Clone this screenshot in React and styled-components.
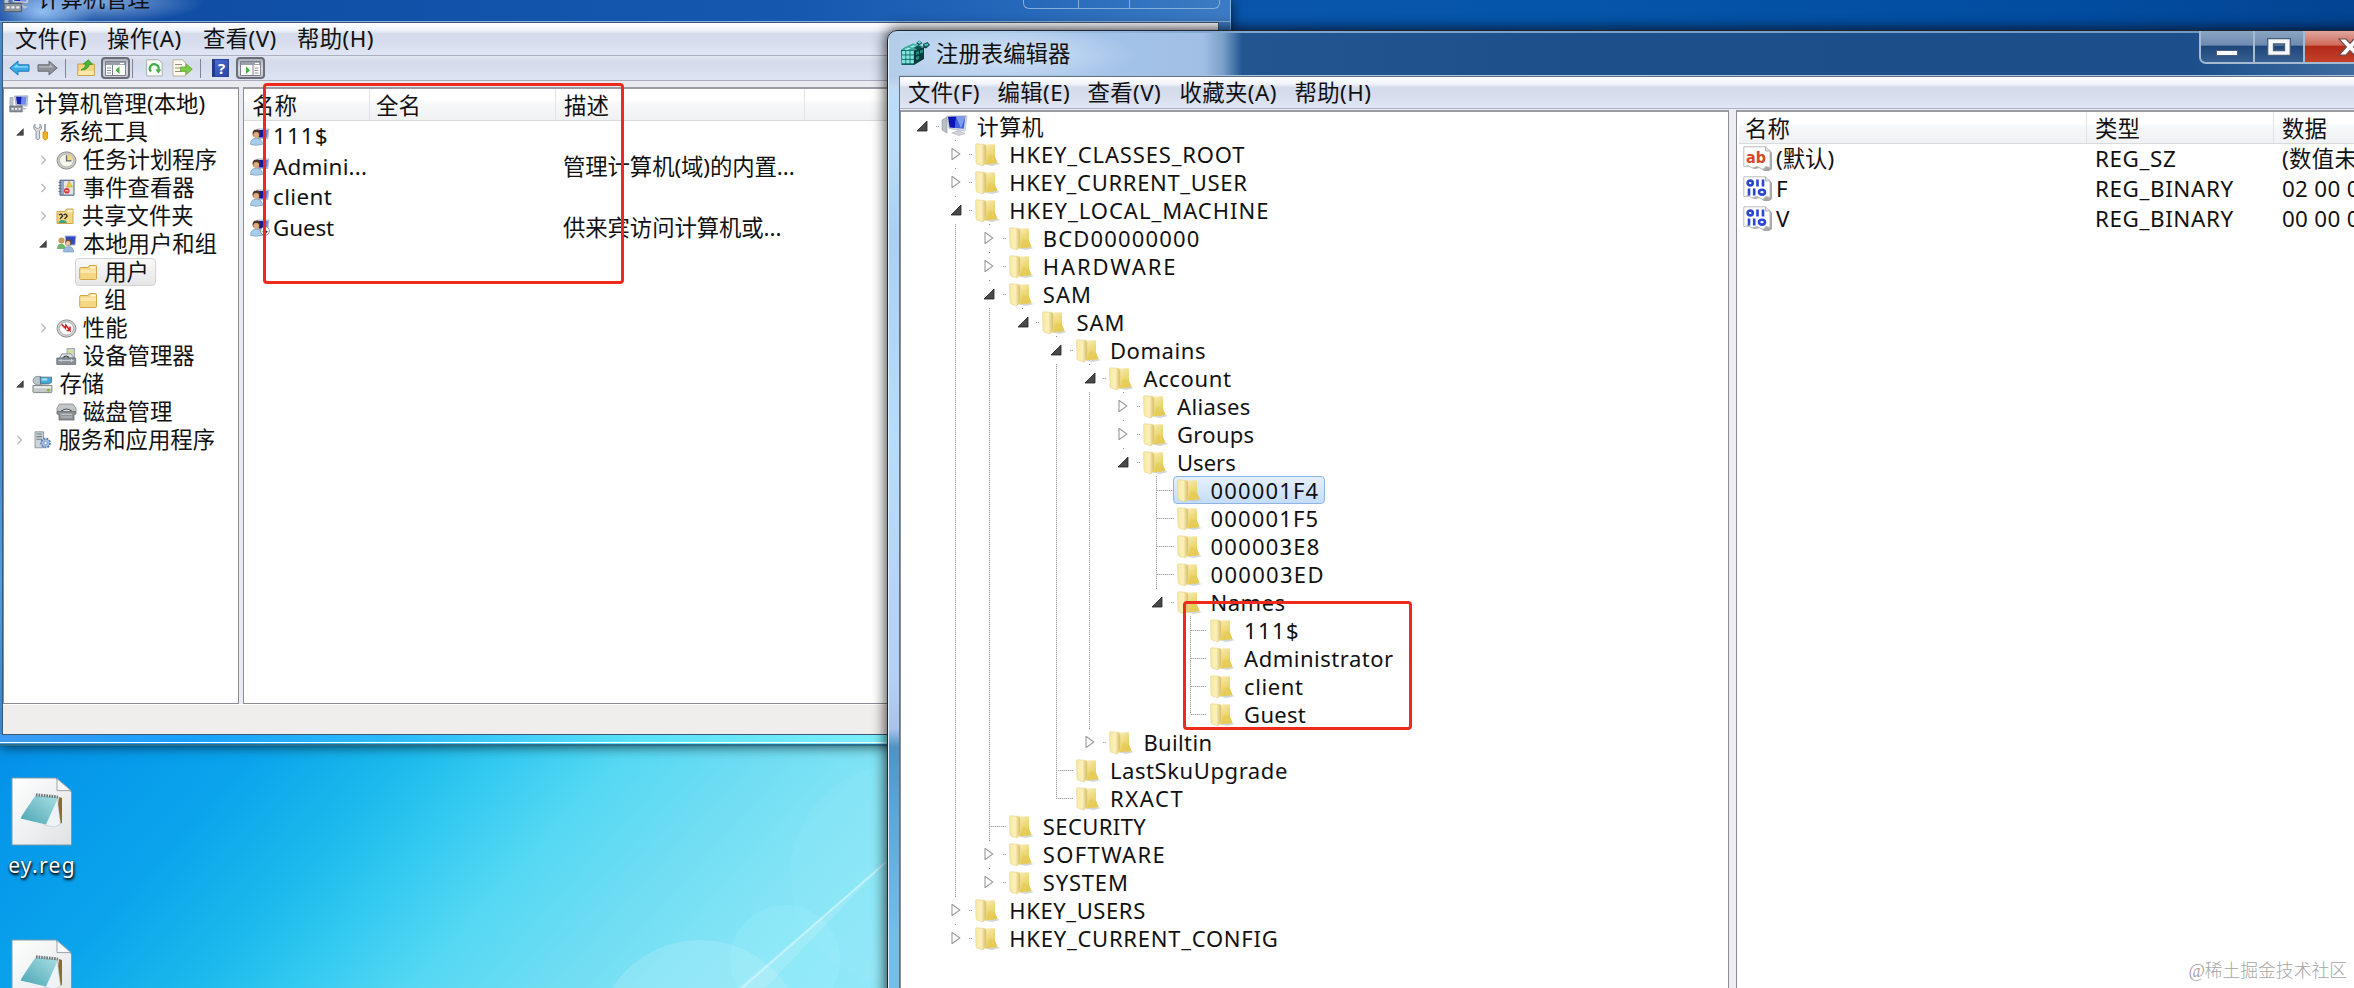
import React from "react";
import styled, { createGlobalStyle, css } from "styled-components";

const GlobalStyle = createGlobalStyle`
  * { box-sizing: border-box; }
  html, body, #root { margin: 0; padding: 0; width: 100%; height: 100%; }
  body {
    overflow: hidden;
    font-family: "Noto Sans", "Noto Sans CJK SC", sans-serif;
    font-size: 22.4px;
    color: #111;
  }
  svg { display: block; flex: none; }
`;

/* ---------- desktop ---------- */

const Desktop = styled.main`
  position: relative;
  width: 2354px;
  height: 988px;
  overflow: hidden;
  background: linear-gradient(90deg, #0a55ac 1200px, #0556ab 1500px, #024c9f 2100px, #034493 2354px);
`;

const Wallpaper = styled.div`
  position: absolute;
  left: 0;
  top: 700px;
  width: 900px;
  height: 288px;
  background: linear-gradient(132deg, #058ce4 0%, #0595ea 8%, #0aa4ec 26%, #1bb9ec 39%, #34caf1 48%, #55d8f3 58%, #6fddf3 70%, #80e3f5 80%, #93e9f8 100%);
`;

const DesktopIcons = styled.div`
  position: absolute;
  left: 0;
  top: 777px;
  width: 84px;
  display: flex;
  flex-direction: column;
  gap: 62px;
`;

const Shortcut = styled.div`
  height: 100px;
  display: flex;
  flex-direction: column;
  align-items: center;
  gap: 4px;
  color: #fff;
  font-size: 21px;
  line-height: 30px;
  letter-spacing: 1.3px;
  text-shadow: 1px 2px 3px #000, 0 1px 2px rgba(0, 0, 0, 0.9);
`;

const Watermark = styled.div`
  position: absolute;
  right: 7px;
  bottom: 5px;
  font-family: "Liberation Serif", "Noto Sans CJK SC", serif;
  font-size: 17.8px;
  font-weight: 300;
  line-height: 24px;
  color: #a5a5a5;
`;

const RedBox = styled.div`
  position: absolute;
  left: ${(p) => p.$x}px;
  top: ${(p) => p.$y}px;
  width: ${(p) => p.$w}px;
  height: ${(p) => p.$h}px;
  border: 3px solid #ee2a1c;
  border-radius: 4px;
`;

/* ---------- shared window parts ---------- */

const barFill = css`
  background: linear-gradient(180deg, #ffffff 0, #f1f4fb 22%, #d4dbea 34%, #d6ddec 60%, #e1e6f5 100%);
`;

const MenuBar = styled.nav`
  display: flex;
  height: ${(p) => p.$h}px;
  padding-left: ${(p) => p.$pad}px;
  border-bottom: 1px solid #aab0c2;
  ${barFill}
`;

const MenuItem = styled.span`
  width: ${(p) => p.$w}px;
  line-height: ${(p) => p.$lh}px;
  letter-spacing: 0.4px;
  white-space: nowrap;
`;

const Pane = styled.section`
  width: ${(p) => p.$w}px;
  flex: none;
  background: #fff;
  border: solid #8b8d94;
  border-width: 2px 1px ${(p) => (p.$open ? 0 : 1)}px 1px;
  border-top-color: #9a9ca3;
  overflow: hidden;
`;

const ListHeader = styled.div`
  display: flex;
  height: 32px;
  margin-left: ${(p) => p.$inset || 0}px;
  border-bottom: 1px solid #d8dadd;
  background: linear-gradient(180deg, #fff 0, #fff 35%, #f7f8f9 45%, #f0f1f3 100%);
`;

const HeadCell = styled.div`
  flex: none;
  width: ${(p) => p.$w}px;
  padding: ${(p) => p.$pt}px 0 0 ${(p) => p.$pl || 8}px;
  line-height: 30px;
  border-right: 1px solid #e1e3e6;
`;

const ListRow = styled.div`
  display: flex;
  height: ${(p) => p.$h}px;
  line-height: ${(p) => p.$h}px;
  white-space: pre;
`;

const Cell = styled.div`
  flex: none;
  display: flex;
  align-items: center;
  width: ${(p) => p.$w}px;
  padding-left: ${(p) => p.$pl}px;
  gap: ${(p) => p.$gap || 0}px;
  letter-spacing: ${(p) => p.$ls || 0}px;
`;

/* ---------- computer management window ---------- */

const ManageWindow = styled.div`
  position: absolute;
  left: 0;
  top: 0;
  width: 1231px;
  height: 746px;
  display: flex;
  flex-direction: column;
  border-right: 1px solid #8ab4e0;
  border-bottom: 2px solid #2b6f8c;
  background:
    linear-gradient(#fff, #fff) 0 742px / 100% 1px no-repeat,
    linear-gradient(90deg, #3d9bf0 0, #189ffc 180px, #2bbcfb 400px, #5ae2f8 640px, #7deefa 890px) 0 734px / 100% 12px no-repeat,
    linear-gradient(180deg, #5087c4 0, #3f7cc0 300px, #4e9fe0 560px, #3b86cf 700px) 0 22px / 3px 100% no-repeat,
    linear-gradient(90deg, #14489a 0, #104ea5 200px, #1558b0 800px, #2466b8 1000px, #3c7cc4 1231px);
  box-shadow: 0 0 12px rgba(0, 0, 0, 0.75);
`;

const ManageTitle = styled.header`
  height: 22px;
  display: flex;
  justify-content: space-between;
  border-bottom: 1px solid #8db2dc;
  background:
    radial-gradient(ellipse 52px 26px at 42px 12px, rgba(160, 205, 255, 0.85), transparent),
    radial-gradient(ellipse 110px 22px at 95px 2px, rgba(150, 185, 230, 0.85), transparent);
`;

const ManageCaption = styled.div`
  display: flex;
  gap: 7px;
  height: 22px;
  padding-left: 3px;
  overflow: hidden;
  line-height: 22px;
`;

const CaptionText = styled.span`
  margin-top: ${(p) => p.$up}px;
`;

const GhostButtons = styled.div`
  display: flex;
  width: 197px;
  height: 9px;
  margin-right: 10px;
  border: 1px solid #86aedc;
  border-top: 0;
  border-radius: 0 0 6px 6px;
`;

const GhostButton = styled.i`
  width: ${(p) => p.$w}px;
  border-right: ${(p) => (p.$last ? 0 : 1)}px solid #86aedc;
`;

const ManageBody = styled.div`
  display: flex;
  flex-direction: column;
  height: 713px;
  margin: 0 11px 0 2px;
  border: 1px solid #3c5676;
  background: #e9ebf1;
`;

const ToolBar = styled.div`
  display: flex;
  align-items: center;
  height: 25px;
  padding-left: 6px;
  border-bottom: 1px solid #a9adb9;
  background: linear-gradient(180deg, #dfe5f2 0, #d3daea 25%, #dde3f2 100%);
`;

const Tool = styled.span`
  display: flex;
  justify-content: center;
  align-items: center;
  width: ${(p) => p.$w}px;
  height: 22px;
  margin-right: ${(p) => p.$mr || 0}px;
  ${(p) => p.$pressed && css`
    border: 2px solid #6b6e77;
    border-radius: 4px;
    background: linear-gradient(180deg, #aeb2bd, #d7dae4 50%, #c9ccd6);
  `}
`;

const ToolSep = styled.i`
  width: 1px;
  height: 19px;
  margin-right: ${(p) => p.$mr}px;
  background: #7f8592;
`;

const ManagePanes = styled.div`
  display: flex;
  height: 617px;
  margin-top: 6px;
  gap: 4px;
`;

const StatusBar = styled.footer`
  flex: 1;
  border-top: 1px solid #fff;
  background: #f0eeed;
`;

const NavTree = styled.div`
  padding: 1px 0 0 5px;
`;

const NavRow = styled.div`
  display: flex;
  height: 28.03px;
  align-items: center;
  line-height: 28px;
  white-space: nowrap;
`;

const NavIndent = styled.span`
  flex: none;
  display: flex;
  justify-content: center;
  width: 23.4px;
  padding-right: 2px;
`;

const NavLabel = styled.span`
  display: flex;
  align-items: center;
  height: 28px;
  gap: 6px;
  ${(p) => p.$selected && css`
    margin-left: -4px;
    padding: 0 6px 0 3px;
    border: 1px solid #d4d4d4;
    border-radius: 4px;
    background: linear-gradient(180deg, #f9f9f9, #e6e6e6);
  `}
`;

/* ---------- registry editor window ---------- */

const RegWindow = styled.div`
  position: absolute;
  left: 887px;
  top: 30px;
  width: 1520px;
  height: 1000px;
  display: flex;
  flex-direction: column;
  padding-left: 11px;
  border: 1px solid #1c2733;
  border-radius: 10px 10px 0 0;
  background:
    linear-gradient(90deg, #e4f1fd, #e4f1fd) 0 0 / 1px 100% no-repeat,
    linear-gradient(90deg, #bcd4ee, #7ea5cc 350px, #6f97c2) 0 0 / 100% 2px no-repeat,
    linear-gradient(180deg, #b4cde9 0, #b4cde9 46px, #c3d9ef 56px, #bcdcf8 60px, #b9dbf7 120px, #a9d0f3 200px, #b7dcfb 400px, #b5cff5 650px, #a9c2e8 698px, #4d93c4 716px, #5aa3d9 770px, #74bde9 900px) 0 0 / 12px 100% no-repeat,
    linear-gradient(90deg, #b5cfeb 0, #a5c4ea 200px, #a1bfe5 315px, #7a9fc9 335px, #235690 354px, #1d4f8a 700px, #1b4e8a 1300px, #3e6c9f 1467px);
  box-shadow: 0 0 14px 1px rgba(0, 0, 0, 0.8);
`;

const RegTitle = styled.header`
  display: flex;
  flex: none;
  height: 45px;
  padding-left: 1px;
`;

const RegCaption = styled.div`
  display: flex;
  flex: none;
  width: 1299px;
  gap: 5px;
  padding-top: 8px;
  line-height: 30px;
  background: radial-gradient(ellipse 130px 30px at 105px 24px, rgba(222, 235, 250, 0.75), transparent);
`;

const CaptionButtons = styled.div`
  display: flex;
  flex: none;
  width: 198px;
  height: 33px;
  border: 2px solid #a5bbd3;
  border-top: 0;
  border-radius: 0 0 7px 7px;
  overflow: hidden;
`;

const CaptionButton = styled.span`
  display: flex;
  flex: none;
  align-items: center;
  justify-content: center;
  width: ${(p) => p.$w}px;
  padding-top: ${(p) => p.$pt || 0}px;
  border-right: 2px solid #a5bbd3;
  background: ${(p) => (p.$close
    ? "linear-gradient(180deg, #e0a79e 0, #cf6a5c 45%, #b32a19 50%, #c4402a 100%)"
    : "linear-gradient(180deg, #8ba4c2 0, #6e8bb0 45%, #1f4679 50%, #365f92 100%)")};
`;

const RegBody = styled.div`
  flex: 1;
  display: flex;
  flex-direction: column;
  border: 1px solid #5f7186;
  border-right: 0;
  background: #eceef3;
  box-shadow: 0 -1px 0 #a9c2dc;
`;

const RegPanes = styled.div`
  flex: 1;
  display: flex;
  gap: 7px;
  padding-top: 1px;
`;

const RegTree = styled.div`
  padding-left: 4.2px;
`;

const RegRow = styled.div`
  display: flex;
  height: 28px;
  line-height: 27px;
  font-size: 22px;
  white-space: nowrap;
`;

const vDots = "repeating-linear-gradient(180deg, #a2a2a2 0 1px, #e4e4e4 1px 2px)";
const hDots = "repeating-linear-gradient(90deg, #a2a2a2 0 1px, #e4e4e4 1px 2px)";

const Guide = styled.span`
  flex: none;
  display: flex;
  align-items: center;
  justify-content: center;
  width: 33.56px;
  height: 28px;
  background: ${(p) => ({
    blank: "none",
    line: `${vDots} 50% 0 / 1px 100% no-repeat`,
    tee: `${vDots} 50% 0 / 1px 100% no-repeat, ${hDots} 100% 50% / 50% 1px no-repeat`,
    elbow: `${vDots} 50% 0 / 1px 50% no-repeat, ${hDots} 100% 50% / 50% 1px no-repeat`,
    root: `${hDots} 100% 50% / 3px 1px no-repeat`,
    node: `linear-gradient(#888, #888) 50% 0 / 1px 1px no-repeat, ${hDots} 100% 50% / 3px 1px no-repeat`,
  })[p.$kind]};
`;

const RegLabel = styled.span`
  display: flex;
  align-items: center;
  height: 28px;
  padding: 0 5px 0 2px;
  gap: 9px;
  border: 1px solid ${(p) => (p.$selected ? "#8db4e3" : "transparent")};
  border-left-width: ${(p) => (p.$selected ? 1 : 0)}px;
  margin-left: ${(p) => (p.$selected ? -1 : 0)}px;
  border-radius: 4px;
  background: ${(p) => (p.$selected ? "linear-gradient(180deg, #e6f0fc, #c4dcf8)" : "none")};
`;

const RegName = styled.span`
  letter-spacing: ${(p) => p.$ls || 0}px;
`;

/* ---------- icons ---------- */

const Expander = ({ open, size = 12 }) => (
  <svg width={size} height={size} viewBox="0 0 12 12">
    {open
      ? <path d="M11 1v10H1z" fill="#4a4a4a" stroke="#222" strokeWidth="0.8" />
      : <path d="M2 0.3v11.4L9.8 6z" fill="#fff" stroke="#999" strokeWidth="1.1" />}
  </svg>
);

const Chevron = () => (
  <svg width="7" height="10" viewBox="0 0 7 10">
    <path d="M1.5 1L5.5 5L1.5 9" fill="none" stroke="#b4b4b4" strokeWidth="1.2" />
  </svg>
);

const FolderOpen = () => (
  <svg width="26" height="25" viewBox="0 0 26 25">
    <defs>
      <linearGradient id="fa" x1="0" x2="1"><stop offset="0" stopColor="#f7e9a2" /><stop offset="0.55" stopColor="#fbf0bd" /><stop offset="1" stopColor="#d6bc63" /></linearGradient>
      <linearGradient id="fb" x1="0" x2="0.6" y2="1"><stop offset="0" stopColor="#faf2c6" /><stop offset="0.5" stopColor="#efdb80" /><stop offset="1" stopColor="#e5cb58" /></linearGradient>
    </defs>
    <path d="M17 19L26 22L18 24L9 22z" fill="#c4c8cc" opacity="0.75" />
    <path d="M8 2.6L20 2.2Q21 2.2 21 3.4V15L23.5 21L9.5 22.6z" fill="url(#fb)" />
    <path d="M15 13L21 14.5L23.5 21L12 22.3z" fill="#e6cc55" opacity="0.8" />
    <path d="M1.6 3Q1.6 1.6 3.2 1.8L10.5 2.4Q12 3 12 5V19L9 24L3 22Q2 21.4 2 20z" fill="url(#fa)" stroke="#e6d184" strokeWidth="0.6" />
  </svg>
);

const FolderSmall = () => (
  <svg width="19" height="17" viewBox="0 0 19 17">
    <path d="M0.7 4.5Q0.7 3.5 1.7 3.5H9L10.5 1.5H16.5Q17.5 1.5 17.5 2.5V14.5Q17.5 15.5 16.5 15.5H1.7Q0.7 15.5 0.7 14.5z" fill="#f5d683" stroke="#cfa64b" />
    <path d="M11.5 2.5h5v2h-5z" fill="#fdf6d8" />
    <path d="M1.5 5.5H17V9H1.5z" fill="#fbe7a9" />
  </svg>
);

const Computer = ({ w = 27 }) => (
  <svg width={w} height={w * 0.78} viewBox="0 0 27 21">
    <path d="M1 5L6 2V18L1 15z" fill="#b9bfc6" stroke="#8d949c" strokeWidth="0.6" />
    <path d="M6 1L26 0.8L24 16L8 13.5z" fill="#dcdfe6" stroke="#a2a7b3" strokeWidth="0.6" />
    <path d="M7 1.8L15 1.6L14.5 13L8.6 12.4z" fill="#0b13b8" />
    <path d="M15 1.6L24.4 1.6L22.8 13.8L14.5 13z" fill="#3f63d8" />
    <path d="M15 1.6L24.4 1.6L20 13.5z" fill="#7f9be9" />
    <path d="M11 18L17 15.5L24 18.5L18 20.5z" fill="#d0d4da" stroke="#a9aeb5" strokeWidth="0.6" />
  </svg>
);

const ManageIcon = ({ w = 20 }) => (
  <svg width={w} height={w * 0.88} viewBox="0 0 20 17.5">
    <path d="M5.5 1L18.8 0.8L18 11L7 10z" fill="#cfd5e2" stroke="#8f96a8" strokeWidth="0.7" />
    <path d="M7 1.8h5.8l-.4 7.6L8 9z" fill="#1420b4" />
    <path d="M12.8 1.8h4.8L16.6 9.8L12.4 9.4z" fill="#6d8be2" />
    <path d="M1 2.5h3v9H1z" fill="#c2c6cc" stroke="#8b9199" strokeWidth="0.6" />
    <path d="M0.8 11h12.4v5.8H0.8z" fill="#8e949c" stroke="#555b63" strokeWidth="0.7" />
    <path d="M2.5 13.8h2.2M6 13.8h2.2M9.5 13.8h2.2" stroke="#eceef1" strokeWidth="1.6" />
    <path d="M13 12l5 1.4l-3 1.6z" fill="#b9bec6" />
  </svg>
);

const ToolsIcon = () => (
  <svg width="20" height="18" viewBox="0 0 20 18">
    <path d="M3 1.2V4.5L5.6 5.4L8 4.5V1.2Q10.4 3 9.5 5.6L7.6 7.6V15.5Q6 18 4 15.5V7.6Q1.4 6.6 1.6 4Q2 2 3 1.2z" fill="#d9dcdf" stroke="#8b9096" strokeWidth="0.9" />
    <path d="M13 1v8" stroke="#9aa0a6" strokeWidth="1.8" />
    <path d="M11 9h4.6V15Q13.3 19 11 15z" fill="#f2b61c" stroke="#c88a0d" strokeWidth="0.8" />
  </svg>
);

const ClockIcon = () => (
  <svg width="21" height="19" viewBox="0 0 21 19">
    <ellipse cx="10.5" cy="9.5" rx="9.4" ry="8.6" fill="#c9c9c6" stroke="#8d8d8a" />
    <ellipse cx="10.5" cy="9.5" rx="7" ry="6.4" fill="#f6f5ea" stroke="#a5a5a0" strokeWidth="0.7" />
    <path d="M10.5 9.5V3.2A7 6.4 0 0 1 17.4 9.5z" fill="#ecd98d" />
    <path d="M10.5 4.2V9.8H15.5" fill="none" stroke="#5d6672" strokeWidth="1.3" />
  </svg>
);

const EventIcon = () => (
  <svg width="21" height="18" viewBox="0 0 21 18">
    <path d="M4 1.2h14v15H4z" fill="#93a7c4" stroke="#4c5f80" />
    <path d="M8 2h9.3v13.4H8z" fill="#e4e6e3" />
    <path d="M13 2.2L16.5 8h-6z" fill="#f4cf3a" stroke="#b79317" strokeWidth="0.5" />
    <circle cx="10.8" cy="11.8" r="2.8" fill="#d9322c" />
    <path d="M9.3 11.8h3" stroke="#fff" />
    <path d="M2.4 3.5h3M2.4 6.5h3M2.4 9.5h3M2.4 12.5h3" stroke="#6a7588" strokeWidth="1.2" />
  </svg>
);

const SharedIcon = () => (
  <svg width="20" height="17" viewBox="0 0 20 17">
    <path d="M1 3.5h8L10.5 1H17v14.5H1z" fill="#f3d781" stroke="#cda44b" />
    <path d="M11.5 2h5v2.2h-5z" fill="#fff6da" />
    <path d="M3 7Q5.5 5 6.6 8L4 11M7.6 7Q10 5 11.2 8L8.6 11" stroke="#333" strokeWidth="1.3" fill="none" />
    <path d="M2.4 15Q3 11.8 6.5 12Q10 11.8 11 15z" fill="#3fa08a" />
  </svg>
);

const UsersIcon = () => (
  <svg width="21" height="18" viewBox="0 0 21 18">
    <path d="M9 1h11l-1 9H10z" fill="#3348c4" stroke="#b0b7d0" />
    <circle cx="5.5" cy="5.5" r="3" fill="#c79a5a" />
    <path d="M1 14Q1 8.6 5.5 8.8Q9.5 9 9.6 14z" fill="#72b86c" />
    <circle cx="12.5" cy="7.5" r="3.2" fill="#6b4a33" />
    <circle cx="12" cy="8.4" r="2.3" fill="#e8c39c" />
    <path d="M7.5 17Q7.5 11.4 12.6 11.6Q17.5 11.6 17.6 17z" fill="#9ab9de" stroke="#6f8fb6" strokeWidth="0.6" />
  </svg>
);

const PerfIcon = () => (
  <svg width="21" height="19" viewBox="0 0 21 19">
    <ellipse cx="10.5" cy="9.5" rx="9.4" ry="8.6" fill="#d6d6d4" stroke="#8a8a88" />
    <ellipse cx="10.5" cy="9.5" rx="7.2" ry="6.6" fill="#fbfbfa" stroke="#9c9c9a" strokeWidth="0.8" />
    <path d="M5.6 5.4L9.4 9.2L9.8 6.2L14 11.4V7.4M10.5 11.5H14.6" fill="none" stroke="#cf1f22" strokeWidth="1.5" />
  </svg>
);

const DeviceIcon = () => (
  <svg width="21" height="19" viewBox="0 0 21 19">
    <path d="M11 1.5h7.5V11H11z" fill="#c9d3d8" stroke="#8c989e" strokeWidth="0.8" />
    <path d="M12.5 3h4v4h-4z" fill="#dfe37d" />
    <path d="M3.5 11L6 6.8H15L18 11z" fill="#dfe2e6" stroke="#7e858d" strokeWidth="0.8" />
    <path d="M7.5 10.5Q10 7.5 13 10.5" fill="none" stroke="#222" strokeWidth="1.2" />
    <path d="M0.8 11h18.8v6.4H0.8z" fill="#8b939b" stroke="#5e666e" strokeWidth="0.8" />
    <path d="M2.5 13.4h15M5 12v3M15.5 12v3" stroke="#cfd4d9" />
  </svg>
);

const StorageIcon = () => (
  <svg width="21" height="19" viewBox="0 0 22 19">
    <ellipse cx="6.5" cy="5.5" rx="5.4" ry="4.6" fill="#bcc5c9" stroke="#88949a" />
    <path d="M8.5 1.8h12v5.4Q19 9.4 14 9H9z" fill="#3fa9d8" stroke="#4a5d68" strokeWidth="0.8" />
    <path d="M10 3h6v2.5h-6z" fill="#9ddcf4" />
    <path d="M1 10.5h19.8V17Q20.8 18 19.6 18H2.2Q1 18 1 17z" fill="#c5c9c8" stroke="#7c8381" />
    <path d="M2 11.4h18v2H2z" fill="#eef0ef" />
    <circle cx="17.2" cy="15.4" r="1.5" fill="#8fae3b" />
  </svg>
);

const DiskIcon = () => (
  <svg width="21" height="18" viewBox="0 0 21 18">
    <path d="M3.5 1H17L20 5V8.5H1V5z" fill="#c3c6c8" stroke="#84898c" strokeWidth="0.8" />
    <path d="M5 8.5Q10.5 3.6 16 8.5" fill="#dfe2e4" stroke="#444" strokeWidth="1.1" />
    <path d="M1 8.6h19V11L18 11.6V17H3V11.6L1 11z" fill="#8e9396" stroke="#64696c" strokeWidth="0.8" />
    <path d="M5 11.4h11M5 14h11" stroke="#c0c4c6" strokeWidth="1.1" />
  </svg>
);

const ServicesIcon = () => (
  <svg width="20" height="18" viewBox="0 0 20 18">
    <path d="M3 0.8h8.5v16H3z" fill="#cdd3d8" stroke="#8b949b" strokeWidth="0.9" />
    <path d="M4.4 3h5.6M4.4 5.6h5.6M4.4 8.2h5.6" stroke="#737c84" strokeWidth="1.1" />
    <circle cx="13.6" cy="12" r="4.4" fill="#a9c3e6" stroke="#5b80b5" strokeWidth="1.8" strokeDasharray="2 1" />
    <circle cx="13.6" cy="12" r="1.7" fill="#fff" stroke="#5b80b5" strokeWidth="0.7" />
  </svg>
);

const PersonIcon = ({ disabled }) => (
  <svg width="20" height="19" viewBox="0 0 20 19">
    <path d="M7 2h12l-1.2 9.5H8z" fill="#d6daea" stroke="#9fa5bd" strokeWidth="0.7" />
    <path d="M8 3h6.5l-.5 7.6H9z" fill="#1018ae" />
    <path d="M14.5 3h3.6l-1 7.6h-3.2z" fill="#6c80dd" />
    <circle cx="6.6" cy="6.6" r="4" fill="#4b3428" />
    <circle cx="6.2" cy="8" r="2.9" fill="#e0aa80" />
    <path d="M0.6 17.5Q0.4 11 6.4 11.4Q12.4 11 12.4 17.5Q6 19 0.6 17.5z" fill="#a8cdec" stroke="#7598bb" strokeWidth="0.7" />
    {disabled && (
      <g>
        <circle cx="15" cy="13" r="4.4" fill="#fff" stroke="#777" strokeWidth="0.8" />
        <path d="M15 10.2v4.6M12.8 13L15 15.6L17.2 13" fill="none" stroke="#222" strokeWidth="1.4" />
      </g>
    )}
  </svg>
);

const Arrow = ({ back }) => (
  <svg width="21" height="16" viewBox="0 0 21 16">
    <path
      d={back ? "M0.8 8L9 1V4.8H20V11.2H9V15z" : "M20.2 8L12 1V4.8H1V11.2H12V15z"}
      fill={back ? "#38a9e4" : "#8d9197"}
      stroke={back ? "#2278b4" : "#6b6f75"}
    />
    <path d={back ? "M4 7.4L8.4 4V6.3H19V7.6z" : "M2 6.2H13V4L16.5 7.4H2z"} fill={back ? "#8fdcfa" : "#b9bdc2"} />
  </svg>
);

const UpFolderIcon = () => (
  <svg width="19" height="18" viewBox="0 0 19 18">
    <path d="M0.8 5h16.6v11.5H0.8z" fill="#f3d57e" stroke="#caa24a" />
    <path d="M1.4 12h15.4v4H1.4z" fill="#fae8ad" />
    <path d="M4 11Q8 9.5 9.2 5H6.4L11.5 0.8L15.4 5.4H12.4Q11 11 4 11z" fill="#45b83a" stroke="#2c8727" strokeWidth="0.7" />
  </svg>
);

const PaneIcon = ({ right }) => (
  <svg width="21" height="15" viewBox="0 0 21 15">
    <path d="M0.5 0.5h20v14H0.5z" fill="#fff" stroke="#7d828c" />
    <path d="M1 1h19v3H1z" fill="#9aa0ab" />
    <path d="M15 2.5h4" stroke="#fff" strokeWidth="1.2" />
    <path d={right ? "M13 4v10" : "M7.5 4v10"} stroke="#7d828c" />
    <path d={right ? "M14.5 7h4M14.5 9.5h4M14.5 12h4" : "M2 7h4M2 9.5h4M2 12h4"} stroke="#8b909a" />
    <path d={right ? "M6 5.5L10 9.2L6 13z" : "M14.5 5.5L10.5 9.2L14.5 13z"} fill="#3fae3a" />
  </svg>
);

const RefreshIcon = () => (
  <svg width="17" height="18" viewBox="0 0 17 18">
    <path d="M0.6 0.8h12L16.2 4v13H0.6z" fill="#f8faf8" stroke="#a9b3ad" />
    <path d="M5 12.6A4.4 4.4 0 1 1 12.4 11" fill="none" stroke="#3fae4a" strokeWidth="2.2" />
    <path d="M9.4 10.4h6L12.4 14.6z" fill="#3fae4a" />
  </svg>
);

const ExportIcon = () => (
  <svg width="21" height="18" viewBox="0 0 21 18">
    <path d="M1 0.8h9.6L13.5 4v13H1z" fill="#fdfaf0" stroke="#b9b199" />
    <path d="M3 5.5h7M3 9h6M3 12.5h7" stroke="#998f74" strokeWidth="1.1" />
    <path d="M8.5 8h6V5l5.8 5.2L14.5 15.4v-3h-6z" fill="#7dcb48" stroke="#5aa62d" strokeWidth="0.7" />
  </svg>
);

const HelpMark = styled.span`
  width: 17px;
  height: 18px;
  border: 1px solid #2b459c;
  border-left: 3px solid #22398a;
  background: linear-gradient(135deg, #4a6bd0, #2743a8);
  color: #fff;
  font-size: 15px;
  font-weight: 700;
  line-height: 16px;
  text-align: center;
`;

const cubes = [2, 6.2, 10.4].flatMap((x) => [12, 16.4, 20.8].map((y) => [x, y]));

const RegeditIcon = () => (
  <svg width="31" height="27" viewBox="0 0 31 27">
    <path d="M1 11L9 7.5L14 9.5V26H1.5z" fill="#12605c" />
    <path d="M14 11L24 8V20L14 26z" fill="#0a3a3c" />
    <path d="M5 8L13 4.6L24 7.5L14 11.6L1 11z" fill="#3aa89c" />
    <path d="M4 10.4l4-1.8 3 .8-4 1.6zM9.4 8l4-1.8 3 .8-4 1.6z" fill="#9df0e6" />
    {cubes.map(([x, y]) => (
      <rect key={`${x}-${y}`} x={x} y={y} width="3.4" height="3.5" fill="#7fe8dc" />
    ))}
    <path d="M16 13l3-1v3l-3 1zM20 11.6l3-1v3l-3 1zM16 18l3-1.2v3l-3 1.4z" fill="#1f8f88" />
    <path d="M16 4L19.5 1.5L22.5 4L19 6.6z" fill="#0e5a58" />
    <path d="M17.5 3.4L19.6 1.8L21.4 3.4L19.4 4.8z" fill="#6fe0d4" />
    <path d="M23 5L27.5 3L30 6L26 9.6L23.4 8.6z" fill="#0f4648" />
    <path d="M24 5.6L27.4 4.2L28.6 6L25.6 7.6z" fill="#4cc7bb" />
    <path d="M14 9l4-2.6 4 1.6-3 3z" fill="#0c4a4a" />
  </svg>
);

const ValueIcon = ({ type }) => (
  <svg width="30" height="26" viewBox="0 0 30 26">
    <path d="M3 3h23l3 4v16l-3 2h-5l-4-3-6 1-4-3-3 1z" fill="#a5a7a5" />
    <path d="M0.8 0.8H22.5L27 5V21.5L23 20.5L20 23.4L14 20.6L9 22L5.5 19.6L0.8 20.6z" fill="#fff" stroke="#b9bbb9" />
    <path d="M22.5 0.8V5H27" fill="#e1e3e1" stroke="#b3b5b3" />
    {type === "sz" ? (
      <text x="3" y="16.5" fontFamily="DejaVu Sans, sans-serif" fontSize="16" fontWeight="700" fill="#d9472b" textLength="20" lengthAdjust="spacingAndGlyphs">ab</text>
    ) : (
      <g fill="none" stroke="#2a46cf" strokeWidth="2.6">
        <ellipse cx="7.2" cy="7" rx="2.6" ry="2.4" />
        <path d="M14.5 3.4v7.2M20 3.4v7.2M6 12.6v7M11.2 12.6v7" />
        <ellipse cx="19" cy="16.2" rx="3" ry="2.4" />
      </g>
    )}
  </svg>
);

const MinIcon = () => (
  <svg width="22" height="6" viewBox="0 0 22 6">
    <path d="M0.5 0.5h21v5h-21z" fill="#fff" stroke="#4a5d78" />
  </svg>
);

const MaxIcon = () => (
  <svg width="24" height="18" viewBox="0 0 24 18">
    <path d="M0.7 0.7h22.6v16.6H0.7zM6.5 6h11v6.5h-11z" fill="#f6f8fb" fillRule="evenodd" stroke="#4a5d78" strokeWidth="1.3" />
  </svg>
);

const CloseIcon = () => (
  <svg width="24" height="18" viewBox="0 0 24 18">
    <path d="M1 1H8L12 5.4L16 1H23L15.6 9L23 17H16L12 12.6L8 17H1L8.4 9z" fill="#fff" stroke="#6b4a4a" strokeWidth="1.2" />
  </svg>
);

const RegFile = () => (
  <svg width="62" height="69" viewBox="0 0 62 69">
    <defs>
      <linearGradient id="pg" x1="0" y1="0" x2="1" y2="1"><stop offset="0" stopColor="#fff" /><stop offset="1" stopColor="#dfe2e4" /></linearGradient>
      <linearGradient id="nb" x1="1" y1="0" x2="0" y2="1"><stop offset="0" stopColor="#a9e0e4" /><stop offset="1" stopColor="#4aa4b4" /></linearGradient>
    </defs>
    <path d="M1 1H44.5L60.5 15V68H1z" fill="url(#pg)" stroke="#7f9aa8" />
    <path d="M46 1.6V13.6H60z" fill="#f7f8f8" stroke="#9aa5aa" />
    <path d="M48 20L51 21L51 46L44 49z" fill="#8a6d2d" />
    <path d="M46 20L49.5 47L44 50L33 48z" fill="#eef3f8" stroke="#b8c6d2" strokeWidth="0.6" />
    <path d="M24.5 18.5L47.5 20L35 47.5L9.5 41.5Q11 38 24.5 18.5z" fill="url(#nb)" />
    <path d="M25 17.8L47 20" stroke="#6e7478" strokeWidth="3" strokeDasharray="1.6 1" />
  </svg>
);

const Sunbeam = styled.svg`
  width: 900px;
  height: 288px;
`;

/* ---------- data ---------- */

const navItems = [
  { d: 0, icon: <ManageIcon />, t: "计算机管理(本地)" },
  { d: 1, icon: <ToolsIcon />, t: "系统工具", x: "open" },
  { d: 2, icon: <ClockIcon />, t: "任务计划程序", x: "closed" },
  { d: 2, icon: <EventIcon />, t: "事件查看器", x: "closed" },
  { d: 2, icon: <SharedIcon />, t: "共享文件夹", x: "closed" },
  { d: 2, icon: <UsersIcon />, t: "本地用户和组", x: "open" },
  { d: 3, icon: <FolderSmall />, t: "用户", sel: true },
  { d: 3, icon: <FolderSmall />, t: "组" },
  { d: 2, icon: <PerfIcon />, t: "性能", x: "closed" },
  { d: 2, icon: <DeviceIcon />, t: "设备管理器" },
  { d: 1, icon: <StorageIcon />, t: "存储", x: "open" },
  { d: 2, icon: <DiskIcon />, t: "磁盘管理" },
  { d: 1, icon: <ServicesIcon />, t: "服务和应用程序", x: "closed" },
];

const accounts = [
  { name: "111$", desc: "", ls: 1.1 },
  { name: "Admini...", desc: "管理计算机(域)的内置...", ls: 0.2 },
  { name: "client", desc: "", ls: 0.4 },
  { name: "Guest", desc: "供来宾访问计算机或...", ls: -0.1, disabled: true },
];

// g: guide kinds from the root level down to the item's own level
const regItems = [
  { g: "R", t: "计算机", ls: 0.4, open: true },
  { g: " N", t: "HKEY_CLASSES_ROOT", ls: 0.84 },
  { g: " N", t: "HKEY_CURRENT_USER", ls: 0.68 },
  { g: " N", t: "HKEY_LOCAL_MACHINE", ls: 1, open: true },
  { g: " |N", t: "BCD00000000", ls: 1.16 },
  { g: " |N", t: "HARDWARE", ls: 1.9 },
  { g: " |N", t: "SAM", ls: 1, open: true },
  { g: " ||N", t: "SAM", ls: 1, open: true },
  { g: " || N", t: "Domains", ls: 0.57, open: true },
  { g: " || |N", t: "Account", ls: 0.64, open: true },
  { g: " || ||N", t: "Aliases", ls: 0.35 },
  { g: " || ||N", t: "Groups", ls: 0.3 },
  { g: " || ||N", t: "Users", ls: 0, open: true },
  { g: " || || T", t: "000001F4", ls: 1.15, sel: true },
  { g: " || || T", t: "000001F5", ls: 1.15 },
  { g: " || || T", t: "000003E8", ls: 1.2 },
  { g: " || || T", t: "000003ED", ls: 1.3 },
  { g: " || || N", t: "Names", ls: 0.5, open: true },
  { g: " || ||  T", t: "111$", ls: 1.4 },
  { g: " || ||  T", t: "Administrator", ls: 0.51 },
  { g: " || ||  T", t: "client", ls: 0.6 },
  { g: " || ||  L", t: "Guest", ls: 0.3 },
  { g: " || |N", t: "Builtin", ls: 0.35 },
  { g: " || T", t: "LastSkuUpgrade", ls: 0.58 },
  { g: " || L", t: "RXACT", ls: 1.6 },
  { g: " |T", t: "SECURITY", ls: 0.4 },
  { g: " |N", t: "SOFTWARE", ls: 1.35 },
  { g: " |N", t: "SYSTEM", ls: 0.8 },
  { g: " N", t: "HKEY_USERS", ls: 0.6 },
  { g: " N", t: "HKEY_CURRENT_CONFIG", ls: 0.75 },
];

const guideKinds = { " ": "blank", "|": "line", T: "tee", L: "elbow", N: "node", R: "root" };

const values = [
  { type: "sz", name: "(默认)", kind: "REG_SZ", data: "(数值未设置)" },
  { type: "bin", name: "F", kind: "REG_BINARY", data: "02 00 01 00" },
  { type: "bin", name: "V", kind: "REG_BINARY", data: "00 00 00 00" },
];

/* ---------- windows ---------- */

const ComputerManagement = () => (
  <ManageWindow>
    <ManageTitle>
      <ManageCaption>
        <CaptionText $up={-12}><ManageIcon w={28} /></CaptionText>
        <CaptionText $up={-12}>计算机管理</CaptionText>
      </ManageCaption>
      <GhostButtons><GhostButton $w={55} /><GhostButton $w={51} /><GhostButton $last $w={89} /></GhostButtons>
    </ManageTitle>
    <ManageBody>
      <MenuBar $h={33} $pad={12}>
        <MenuItem $w={92} $lh={32}>文件(F)</MenuItem>
        <MenuItem $w={96} $lh={32}>操作(A)</MenuItem>
        <MenuItem $w={94} $lh={32}>查看(V)</MenuItem>
        <MenuItem $w={90} $lh={32}>帮助(H)</MenuItem>
      </MenuBar>
      <ToolBar>
        <Tool $w={21} $mr={7}><Arrow back /></Tool>
        <Tool $w={21} $mr={7}><Arrow /></Tool>
        <ToolSep $mr={11} />
        <Tool $w={19} $mr={5}><UpFolderIcon /></Tool>
        <Tool $w={29} $mr={2} $pressed><PaneIcon /></Tool>
        <ToolSep $mr={13} />
        <Tool $w={17} $mr={9}><RefreshIcon /></Tool>
        <Tool $w={21} $mr={7}><ExportIcon /></Tool>
        <ToolSep $mr={11} />
        <Tool $w={17} $mr={7}><HelpMark>?</HelpMark></Tool>
        <Tool $w={29} $pressed><PaneIcon right /></Tool>
      </ToolBar>
      <ManagePanes>
        <Pane $w={236}>
          <NavTree>
            {navItems.map((n) => (
              <NavRow key={n.t}>
                {Array.from({ length: n.d }, (_, i) => (
                  <NavIndent key={i}>
                    {i === n.d - 1 && n.x === "open" && <Expander open size={8} />}
                    {i === n.d - 1 && n.x === "closed" && <Chevron />}
                  </NavIndent>
                ))}
                <NavLabel $selected={n.sel}>{n.icon}<span>{n.t}</span></NavLabel>
              </NavRow>
            ))}
          </NavTree>
        </Pane>
        <Pane $w={973}>
          <ListHeader>
            <HeadCell $w={126} $pt={2}>名称</HeadCell>
            <HeadCell $w={186} $pt={2} $pl={6}>全名</HeadCell>
            <HeadCell $w={249} $pt={2}>描述</HeadCell>
          </ListHeader>
          {accounts.map((a) => (
            <ListRow key={a.name} $h={30.5}>
              <Cell $w={312} $pl={6} $gap={3} $ls={a.ls}><PersonIcon disabled={a.disabled} />{a.name}</Cell>
              <Cell $w={249} $pl={7} $ls={-0.1}>{a.desc}</Cell>
            </ListRow>
          ))}
        </Pane>
      </ManagePanes>
      <StatusBar />
    </ManageBody>
  </ManageWindow>
);

const RegistryEditor = () => (
  <RegWindow>
    <RegTitle>
      <RegCaption><RegeditIcon /><span>注册表编辑器</span></RegCaption>
      <CaptionButtons>
        <CaptionButton $w={54} $pt={12}><MinIcon /></CaptionButton>
        <CaptionButton $w={50}><MaxIcon /></CaptionButton>
        <CaptionButton $w={92} $close><CloseIcon /></CaptionButton>
      </CaptionButtons>
    </RegTitle>
    <RegBody>
      <MenuBar $h={32} $pad={8}>
        <MenuItem $w={89.5} $lh={31}>文件(F)</MenuItem>
        <MenuItem $w={90} $lh={31}>编辑(E)</MenuItem>
        <MenuItem $w={92} $lh={31}>查看(V)</MenuItem>
        <MenuItem $w={115} $lh={31}>收藏夹(A)</MenuItem>
        <MenuItem $w={90} $lh={31}>帮助(H)</MenuItem>
      </MenuBar>
      <RegPanes>
        <Pane $w={829} $open>
          <RegTree>
            {regItems.map((r, i) => (
              <RegRow key={i}>
                {r.g.split("").map((k, j) => (
                  <Guide key={j} $kind={guideKinds[k]}>{(k === "N" || k === "R") && <Expander open={r.open} />}</Guide>
                ))}
                <RegLabel $selected={r.sel}>{r.g === "R" ? <Computer /> : <FolderOpen />}<RegName $ls={r.ls}>{r.t}</RegName></RegLabel>
              </RegRow>
            ))}
          </RegTree>
        </Pane>
        <Pane $w={680} $open>
          <ListHeader $inset={2}>
            <HeadCell $w={348} $pt={2} $pl={6}>名称</HeadCell>
            <HeadCell $w={187} $pt={2}>类型</HeadCell>
            <HeadCell $w={140} $pt={2}>数据</HeadCell>
          </ListHeader>
          {values.map((v) => (
            <ListRow key={v.name} $h={30.2}>
              <Cell $w={350} $pl={6} $gap={3}><ValueIcon type={v.type} />{v.name}</Cell>
              <Cell $w={187} $pl={8} $ls={0.6}>{v.kind}</Cell>
              <Cell $w={140} $pl={8} $ls={0.3}>{v.data}</Cell>
            </ListRow>
          ))}
        </Pane>
      </RegPanes>
    </RegBody>
  </RegWindow>
);

export default function App() {
  return (
    <>
      <GlobalStyle />
      <Desktop>
        <Wallpaper>
          <Sunbeam viewBox="0 0 900 288">
            <circle cx="700" cy="345" r="105" fill="#fff" opacity="0.14" />
            <circle cx="785" cy="260" r="55" fill="#b5f6ff" opacity="0.16" />
            <circle cx="900" cy="175" r="110" fill="#fff" opacity="0.04" />
            <path d="M886 162L738 288H765z" fill="#fff" opacity="0.14" />
            <path d="M886 162L742 288" stroke="#e8fbff" strokeWidth="2" opacity="0.5" />
          </Sunbeam>
        </Wallpaper>
        <DesktopIcons>
          <Shortcut><RegFile />ey.reg</Shortcut>
          <Shortcut><RegFile /></Shortcut>
        </DesktopIcons>
        <ComputerManagement />
        <RedBox $x={263} $y={83} $w={361} $h={201} />
        <RegistryEditor />
        <RedBox $x={1183} $y={601} $w={229} $h={129} />
        <Watermark>@稀土掘金技术社区</Watermark>
      </Desktop>
    </>
  );
}
